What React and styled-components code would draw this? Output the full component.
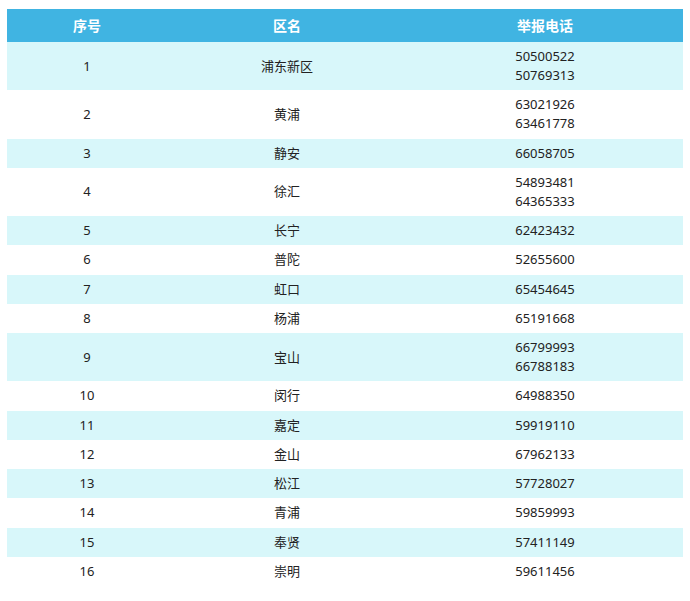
import React from 'react';
import styled, { createGlobalStyle } from 'styled-components';

const GlobalStyle = createGlobalStyle`
  body {
    margin: 0;
    background: #fff;
    font-family: "Noto Sans", "Noto Sans CJK SC", sans-serif;
  }
`;

const Page = styled.div`
  padding: 9px 7px;
`;

const Table = styled.table`
  width: 676px;
  border-collapse: collapse;
  table-layout: fixed;
  font-size: 13px;
  color: #222;
`;

const HeadCell = styled.th`
  background-color: #40b4e2;
  color: #fff;
  font-size: 14px;
  font-weight: bold;
  line-height: 19px;
  padding: 7px 0;
  text-align: center;
  font-family: "Noto Sans CJK SC", sans-serif;
`;

const Row = styled.tr`
  background-color: ${({ $striped }) => ($striped ? '#d8f7fa' : '#fff')};
`;

const Cell = styled.td`
  text-align: center;
  vertical-align: middle;
  line-height: 19px;
  padding: 5.125px 0;
`;

const Phone = styled.div`
  line-height: 19px;
`;

const rows = [
  ['1', '浦东新区', ['50500522', '50769313']],
  ['2', '黄浦', ['63021926', '63461778']],
  ['3', '静安', ['66058705']],
  ['4', '徐汇', ['54893481', '64365333']],
  ['5', '长宁', ['62423432']],
  ['6', '普陀', ['52655600']],
  ['7', '虹口', ['65454645']],
  ['8', '杨浦', ['65191668']],
  ['9', '宝山', ['66799993', '66788183']],
  ['10', '闵行', ['64988350']],
  ['11', '嘉定', ['59919110']],
  ['12', '金山', ['67962133']],
  ['13', '松江', ['57728027']],
  ['14', '青浦', ['59859993']],
  ['15', '奉贤', ['57411149']],
  ['16', '崇明', ['59611456']],
];

export default function App() {
  return (
    <Page>
      <GlobalStyle />
      <Table>
        <colgroup>
          <col style={{ width: 160 }} />
          <col style={{ width: 240 }} />
          <col style={{ width: 276 }} />
        </colgroup>
        <thead>
          <tr>
            <HeadCell>序号</HeadCell>
            <HeadCell>区名</HeadCell>
            <HeadCell>举报电话</HeadCell>
          </tr>
        </thead>
        <tbody>
          {rows.map(([no, name, phones], index) => (
            <Row key={no} $striped={index % 2 === 0}>
              <Cell>{no}</Cell>
              <Cell>{name}</Cell>
              <Cell>
                {phones.map((p) => (
                  <Phone key={p}>{p}</Phone>
                ))}
              </Cell>
            </Row>
          ))}
        </tbody>
      </Table>
    </Page>
  );
}
